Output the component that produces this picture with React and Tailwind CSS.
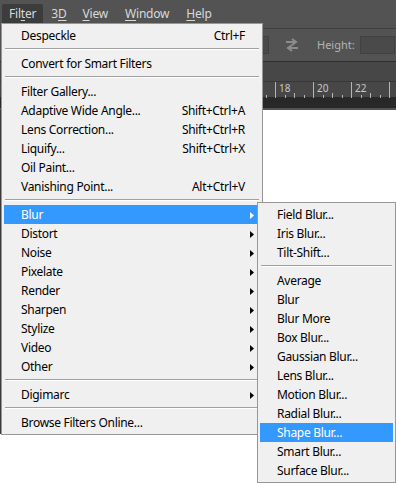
import React from "react";

const font = { fontFamily: '"Noto Sans", "Open Sans", sans-serif' };

const mainItems = [
  { label: "Despeckle", shortcut: "Ctrl+F" },
  { sep: true },
  { label: "Convert for Smart Filters" },
  { sep: true },
  { label: "Filter Gallery..." },
  { label: "Adaptive Wide Angle...", shortcut: "Shift+Ctrl+A" },
  { label: "Lens Correction...", shortcut: "Shift+Ctrl+R" },
  { label: "Liquify...", shortcut: "Shift+Ctrl+X" },
  { label: "Oil Paint..." },
  { label: "Vanishing Point...", shortcut: "Alt+Ctrl+V" },
  { sep: true },
  { label: "Blur", sub: true, active: true },
  { label: "Distort", sub: true },
  { label: "Noise", sub: true },
  { label: "Pixelate", sub: true },
  { label: "Render", sub: true },
  { label: "Sharpen", sub: true },
  { label: "Stylize", sub: true },
  { label: "Video", sub: true },
  { label: "Other", sub: true },
  { sep: true },
  { label: "Digimarc", sub: true },
  { sep: true },
  { label: "Browse Filters Online..." },
];

const blurItems = [
  { label: "Field Blur..." },
  { label: "Iris Blur..." },
  { label: "Tilt-Shift..." },
  { sep: true },
  { label: "Average" },
  { label: "Blur" },
  { label: "Blur More" },
  { label: "Box Blur..." },
  { label: "Gaussian Blur..." },
  { label: "Lens Blur..." },
  { label: "Motion Blur..." },
  { label: "Radial Blur..." },
  { label: "Shape Blur...", active: true },
  { label: "Smart Blur..." },
  { label: "Surface Blur..." },
];

function Arrow({ white }) {
  return (
    <svg width="4" height="7" viewBox="0 0 4 7">
      <path d="M0 0 L4 3.5 L0 7 Z" fill={white ? "#ffffff" : "#000000"} />
    </svg>
  );
}

function Separator() {
  return (
    <div className="pt-[3px] pb-[4px] mx-[3px]">
      <div className="h-px bg-[#a0a0a0]" />
      <div className="h-px bg-white" />
    </div>
  );
}

function MenuRow({ item }) {
  return (
    <div
      className={`mx-[2px] h-[19px] flex items-center pl-[17px] pt-px text-[12px] tracking-[-0.3px] leading-none ${
        item.active ? "bg-[#3399ff] text-white" : "text-black"
      }`}
    >
      <span className="flex-1 whitespace-nowrap">{item.label}</span>
      {item.shortcut && <span className="whitespace-nowrap">{item.shortcut}</span>}
      <span className="w-[15px] flex justify-start pl-[5px]">
        {item.sub && <Arrow white={item.active} />}
      </span>
    </div>
  );
}

function Ruler() {
  const ticks = [];
  for (let x = 256; x < 396; x += 9.5) ticks.push(x);
  return (
    <svg width="396" height="16" className="block">
      {ticks.map((x, i) => {
        const major = Math.abs(((x - 275) % 38 + 38) % 38) < 0.1;
        const half = Math.abs(((x - 275) % 19 + 19) % 19) < 0.1;
        const h = major ? 16 : half ? 5 : 3;
        return (
          <line
            key={i}
            x1={Math.round(x) + 0.5}
            x2={Math.round(x) + 0.5}
            y1={16 - h}
            y2={16}
            stroke="#b5b5b5"
            strokeWidth="1"
          />
        );
      })}
    </svg>
  );
}

export default function App() {
  return (
    <div className="relative w-[396px] h-[483px] bg-white overflow-hidden" style={font}>
      {/* Photoshop chrome behind the menus */}
      <div className="h-[110px] bg-[#535353]">
        {/* Menu bar */}
        <div className="h-[28px] bg-[#535353] flex items-start pt-[4px] pl-[2px] text-[12px] tracking-[-0.2px] text-[#d9d9d9]">
          <div className="h-[19px] px-[7px] flex items-center rounded-t-[2px] bg-[#3c3c3c]">
            Fil<span className="underline underline-offset-2">t</span>er
          </div>
          <div className="h-[19px] ml-[1px] px-[7px] flex items-center">
            3<span className="underline underline-offset-2">D</span>
          </div>
          <div className="h-[19px] ml-[1px] px-[8px] flex items-center">
            <span className="underline underline-offset-2">V</span>iew
          </div>
          <div className="h-[19px] ml-[1px] px-[8px] flex items-center">
            <span className="underline underline-offset-2">W</span>indow
          </div>
          <div className="h-[19px] ml-[1px] px-[8px] flex items-center">
            <span className="underline underline-offset-2">H</span>elp
          </div>
        </div>
        {/* Options bar */}
        <div className="h-[34px] border-t border-[#3e3e3e] border-b border-b-[#2e2e2e] bg-[#535353] flex items-center">
          <div className="ml-[230px] w-[39px] h-[18px] border border-[#414141] bg-[#4a4a4a]" />
          <svg width="14" height="14" viewBox="0 0 14 14" className="ml-[16px]">
            <path d="M1 4 H10 M7 1 L11 4 L7 7" stroke="#8c8c8c" strokeWidth="2" fill="none" />
            <path d="M13 10 H4 M7 7 L3 10 L7 13" stroke="#8c8c8c" strokeWidth="2" fill="none" />
          </svg>
          <span className="ml-[18px] text-[11px] text-[#b4b4b4]">Height:</span>
          <div className="ml-[5px] w-[35px] h-[18px] border border-[#414141] bg-[#4a4a4a]" />
        </div>
        {/* Tab bar */}
        <div className="h-[20px] bg-[#474747] border-b border-[#383838]" />
        {/* Ruler */}
        <div className="relative h-[16px] bg-[#474747] border-b border-[#2a2a2a]">
          <Ruler />
          <div className="absolute inset-0 text-[10px] leading-none text-[#c8c8c8]">
            <span className="absolute left-[279px] top-[1px]">18</span>
            <span className="absolute left-[317px] top-[1px]">20</span>
            <span className="absolute left-[355px] top-[1px]">22</span>
          </div>
        </div>
        <div className="h-[10px] bg-[#282828]" />
      </div>
      <div className="absolute left-0 top-[110px] w-px h-[324px] bg-[#3a3a3a]" />

      {/* Filter menu */}
      <div className="absolute left-[1px] top-[23px] w-[262px] bg-[#f0f0f0] border border-[#979797] pt-[2px] pb-[2px]">
        {mainItems.map((item, i) =>
          item.sep ? <Separator key={i} /> : <MenuRow key={i} item={item} />
        )}
      </div>

      {/* Blur submenu */}
      <div className="absolute left-[257px] top-[202px] w-[139px] bg-[#f0f0f0] border border-[#979797] pt-[2px] pb-[2px]">
        {blurItems.map((item, i) =>
          item.sep ? <Separator key={i} /> : <MenuRow key={i} item={item} />
        )}
      </div>
    </div>
  );
}
